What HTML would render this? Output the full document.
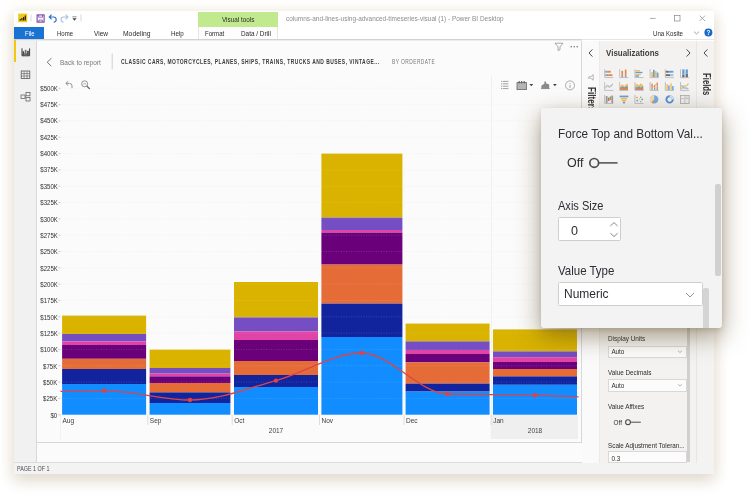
<!DOCTYPE html>
<html lang="en"><head><meta charset="utf-8"><title>Power BI Desktop</title><style>
html,body{margin:0;padding:0;}
body{width:750px;height:500px;position:relative;overflow:hidden;background:#ffffff;font-family:'Liberation Sans',sans-serif;}
div{position:absolute;}
.t{position:absolute;white-space:pre;line-height:1;}
.chart{position:absolute;left:0;top:0;}
#root{left:0;top:0;width:750px;height:500px;will-change:transform;}
</style></head>
<body>
<div id="root">
<div style="left:14px;top:11px;width:700px;height:463px;background:#ffffff;box-shadow:0 1px 14px 2px rgba(205,165,95,0.16), 0 7px 14px 0 rgba(110,100,80,0.20);"></div>
<div style="left:14px;top:27px;width:30.2px;height:12.3px;background:#1a73d2;"></div>
<div style="left:197.6px;top:12px;width:80.6px;height:15px;background:#c1ea8f;"></div>
<div style="left:197.6px;top:27px;width:80.6px;height:12.5px;background:#fdfdfd;border-left:1px solid #e6e6e6;border-right:1px solid #e6e6e6;box-sizing:border-box;"></div>
<div style="left:14px;top:39.2px;width:568px;height:1.2px;background:#d2d2d2;"></div>
<div style="left:14px;top:40.4px;width:568px;height:0.8px;background:#ececec;"></div>
<div style="left:582px;top:39.3px;width:132px;height:1.0px;background:#e6e6e6;"></div>
<div style="left:14px;top:40.5px;width:22.5px;height:423px;background:#f1f1f1;"></div>
<div style="left:14px;top:40px;width:1.5px;height:22.4px;background:#f2c811;"></div>
<div style="left:36.3px;top:40.5px;width:0.8px;height:421.5px;background:#d8d8d8;"></div>
<div style="left:37px;top:40.5px;width:544.5px;height:422.5px;background:#fbfbfb;"></div>
<div style="left:37px;top:441.5px;width:544.5px;height:0.9px;background:#d8d8d8;"></div>
<div style="left:581px;top:40.5px;width:0.9px;height:402px;background:#d8d8d8;"></div>
<div style="left:490.8px;top:75px;width:1px;height:340px;background:#f0f0f0;"></div>
<div style="left:491.3px;top:415px;width:87.2px;height:24px;background:#f0efef;"></div>
<div style="left:14px;top:461.8px;width:700px;height:12.2px;background:#f3f3f3;border-top:1px solid #dcdcdc;box-sizing:border-box;"></div>
<div style="left:582px;top:40.5px;width:17px;height:422.5px;background:#fafafa;"></div>
<div style="left:599px;top:40.5px;width:97.5px;height:422.5px;background:#f3f2f1;"></div>
<div style="left:598.6px;top:40.5px;width:0.8px;height:422.5px;background:#ebebeb;"></div>
<div style="left:696.3px;top:40.5px;width:0.8px;height:422.5px;background:#e6e6e6;"></div>
<div style="left:697px;top:40.5px;width:17px;height:422.5px;background:#f4f3f2;"></div>
<span class="t" style="left:286.00px;top:16.37px;font-size:6.3px;color:#8c8c8c;transform:scaleX(1.0260);transform-origin:left top;">columns-and-lines-using-advanced-timeseries-visual (1) - Power BI Desktop</span>
<span class="t" style="left:24.50px;top:30.91px;font-size:6.6px;color:#ffffff;transform:scaleX(0.9035);transform-origin:left top;">File</span>
<span class="t" style="left:57.00px;top:30.91px;font-size:6.6px;color:#2b2b2b;transform:scaleX(0.9094);transform-origin:left top;">Home</span>
<span class="t" style="left:93.50px;top:30.91px;font-size:6.6px;color:#2b2b2b;transform:scaleX(0.9868);transform-origin:left top;">View</span>
<span class="t" style="left:122.60px;top:30.91px;font-size:6.6px;color:#2b2b2b;transform:scaleX(1.0237);transform-origin:left top;">Modeling</span>
<span class="t" style="left:170.60px;top:30.91px;font-size:6.6px;color:#2b2b2b;transform:scaleX(0.9438);transform-origin:left top;">Help</span>
<span class="t" style="left:221.60px;top:16.91px;font-size:6.6px;color:#2b2b2b;transform:scaleX(0.9640);transform-origin:left top;">Visual tools</span>
<span class="t" style="left:205.40px;top:30.91px;font-size:6.6px;color:#2b2b2b;transform:scaleX(0.9191);transform-origin:left top;">Format</span>
<span class="t" style="left:240.60px;top:30.91px;font-size:6.6px;color:#2b2b2b;transform:scaleX(0.9681);transform-origin:left top;">Data / Drill</span>
<span class="t" style="left:653.00px;top:30.81px;font-size:6.6px;color:#2b2b2b;transform:scaleX(0.9298);transform-origin:left top;">Una Kosite</span>
<span class="t" style="left:60.00px;top:60.01px;font-size:6.6px;color:#7a7a7a;transform:scaleX(0.9940);transform-origin:left top;">Back to report</span>
<span class="t" style="left:121.00px;top:58.58px;font-size:6.4px;color:#3a3a3a;font-weight:700;letter-spacing:0.6px;transform:scaleX(0.7758);transform-origin:left top;">CLASSIC CARS, MOTORCYCLES, PLANES, SHIPS, TRAINS, TRUCKS AND BUSES, VINTAGE...</span>
<span class="t" style="left:392.00px;top:58.58px;font-size:6.4px;color:#777;letter-spacing:0.6px;transform:scaleX(0.7573);transform-origin:left top;">BY ORDERDATE</span>
<span class="t" style="left:50.17px;top:412.80px;font-size:6.5px;color:#2e2e2e;transform:scaleX(0.9300);transform-origin:right top;">$0</span>
<span class="t" style="left:42.21px;top:396.44px;font-size:6.5px;color:#2e2e2e;transform:scaleX(0.9300);transform-origin:right top;">$25K</span>
<span class="t" style="left:42.21px;top:380.09px;font-size:6.5px;color:#2e2e2e;transform:scaleX(0.9300);transform-origin:right top;">$50K</span>
<span class="t" style="left:42.21px;top:363.73px;font-size:6.5px;color:#2e2e2e;transform:scaleX(0.9300);transform-origin:right top;">$75K</span>
<span class="t" style="left:38.60px;top:347.38px;font-size:6.5px;color:#2e2e2e;transform:scaleX(0.9300);transform-origin:right top;">$100K</span>
<span class="t" style="left:38.60px;top:331.02px;font-size:6.5px;color:#2e2e2e;transform:scaleX(0.9300);transform-origin:right top;">$125K</span>
<span class="t" style="left:38.60px;top:314.67px;font-size:6.5px;color:#2e2e2e;transform:scaleX(0.9300);transform-origin:right top;">$150K</span>
<span class="t" style="left:38.60px;top:298.31px;font-size:6.5px;color:#2e2e2e;transform:scaleX(0.9300);transform-origin:right top;">$175K</span>
<span class="t" style="left:38.60px;top:281.96px;font-size:6.5px;color:#2e2e2e;transform:scaleX(0.9300);transform-origin:right top;">$200K</span>
<span class="t" style="left:38.60px;top:265.60px;font-size:6.5px;color:#2e2e2e;transform:scaleX(0.9300);transform-origin:right top;">$225K</span>
<span class="t" style="left:38.60px;top:249.25px;font-size:6.5px;color:#2e2e2e;transform:scaleX(0.9300);transform-origin:right top;">$250K</span>
<span class="t" style="left:38.60px;top:232.89px;font-size:6.5px;color:#2e2e2e;transform:scaleX(0.9300);transform-origin:right top;">$275K</span>
<span class="t" style="left:38.60px;top:216.54px;font-size:6.5px;color:#2e2e2e;transform:scaleX(0.9300);transform-origin:right top;">$300K</span>
<span class="t" style="left:38.60px;top:200.18px;font-size:6.5px;color:#2e2e2e;transform:scaleX(0.9300);transform-origin:right top;">$325K</span>
<span class="t" style="left:38.60px;top:183.83px;font-size:6.5px;color:#2e2e2e;transform:scaleX(0.9300);transform-origin:right top;">$350K</span>
<span class="t" style="left:38.60px;top:167.47px;font-size:6.5px;color:#2e2e2e;transform:scaleX(0.9300);transform-origin:right top;">$375K</span>
<span class="t" style="left:38.60px;top:151.12px;font-size:6.5px;color:#2e2e2e;transform:scaleX(0.9300);transform-origin:right top;">$400K</span>
<span class="t" style="left:38.60px;top:134.76px;font-size:6.5px;color:#2e2e2e;transform:scaleX(0.9300);transform-origin:right top;">$425K</span>
<span class="t" style="left:38.60px;top:118.41px;font-size:6.5px;color:#2e2e2e;transform:scaleX(0.9300);transform-origin:right top;">$450K</span>
<span class="t" style="left:38.60px;top:102.05px;font-size:6.5px;color:#2e2e2e;transform:scaleX(0.9300);transform-origin:right top;">$475K</span>
<span class="t" style="left:38.60px;top:85.70px;font-size:6.5px;color:#2e2e2e;transform:scaleX(0.9300);transform-origin:right top;">$500K</span>
<span class="t" style="left:62.50px;top:417.70px;font-size:6.5px;color:#3c3c3c;">Aug</span>
<span class="t" style="left:149.80px;top:417.70px;font-size:6.5px;color:#3c3c3c;">Sep</span>
<span class="t" style="left:234.20px;top:417.70px;font-size:6.5px;color:#3c3c3c;">Oct</span>
<span class="t" style="left:321.50px;top:417.70px;font-size:6.5px;color:#3c3c3c;">Nov</span>
<span class="t" style="left:406.00px;top:417.70px;font-size:6.5px;color:#3c3c3c;">Dec</span>
<span class="t" style="left:493.20px;top:417.70px;font-size:6.5px;color:#3c3c3c;">Jan</span>
<span class="t" style="left:268.77px;top:428.00px;font-size:6.5px;color:#444;">2017</span>
<span class="t" style="left:527.77px;top:428.00px;font-size:6.5px;color:#444;">2018</span>
<span class="t" style="left:17.20px;top:465.94px;font-size:6.8px;color:#4a4a4a;transform:scaleX(0.7893);transform-origin:left top;">PAGE 1 OF 1</span>
<span class="t" style="left:606.00px;top:48.27px;font-size:9.6px;color:#404040;font-weight:700;transform:scaleX(0.8306);transform-origin:left top;">Visualizations</span>
<span class="t" style="left:608.40px;top:336.30px;font-size:6.5px;color:#2c2c2c;transform:scaleX(0.9806);transform-origin:left top;">Display Units</span>
<span class="t" style="left:608.40px;top:370.30px;font-size:6.5px;color:#2c2c2c;transform:scaleX(0.9712);transform-origin:left top;">Value Decimals</span>
<span class="t" style="left:608.40px;top:403.70px;font-size:6.5px;color:#2c2c2c;transform:scaleX(0.9788);transform-origin:left top;">Value Affixes</span>
<span class="t" style="left:608.40px;top:443.10px;font-size:6.5px;color:#2c2c2c;transform:scaleX(0.9739);transform-origin:left top;">Scale Adjustment Toleran...</span>
<span class="t" style="left:710.87px;top:73.20px;font-size:10px;color:#333;font-weight:700;transform:rotate(90deg) scaleX(0.7749);transform-origin:left top;">Fields</span>
<span class="t" style="left:596.07px;top:87.20px;font-size:10px;color:#333;font-weight:700;transform:rotate(90deg) scaleX(0.8196);transform-origin:left top;">Filters</span>
<svg class="chart" width="750" height="500" viewBox="0 0 750 500"><line x1="61" x2="578" y1="414.70" y2="414.70" stroke="#f4ecf0" stroke-width="0.7" stroke-dasharray="1 1.5"/><line x1="58.4" x2="60.4" y1="414.70" y2="414.70" stroke="#b0b0b0" stroke-width="0.7"/><line x1="61" x2="578" y1="398.38" y2="398.38" stroke="#f4ecf0" stroke-width="0.7" stroke-dasharray="1 1.5"/><line x1="58.4" x2="60.4" y1="398.38" y2="398.38" stroke="#b0b0b0" stroke-width="0.7"/><line x1="61" x2="578" y1="382.06" y2="382.06" stroke="#f4ecf0" stroke-width="0.7" stroke-dasharray="1 1.5"/><line x1="58.4" x2="60.4" y1="382.06" y2="382.06" stroke="#b0b0b0" stroke-width="0.7"/><line x1="61" x2="578" y1="365.74" y2="365.74" stroke="#f4ecf0" stroke-width="0.7" stroke-dasharray="1 1.5"/><line x1="58.4" x2="60.4" y1="365.74" y2="365.74" stroke="#b0b0b0" stroke-width="0.7"/><line x1="61" x2="578" y1="349.42" y2="349.42" stroke="#f4ecf0" stroke-width="0.7" stroke-dasharray="1 1.5"/><line x1="58.4" x2="60.4" y1="349.42" y2="349.42" stroke="#b0b0b0" stroke-width="0.7"/><line x1="61" x2="578" y1="333.10" y2="333.10" stroke="#f4ecf0" stroke-width="0.7" stroke-dasharray="1 1.5"/><line x1="58.4" x2="60.4" y1="333.10" y2="333.10" stroke="#b0b0b0" stroke-width="0.7"/><line x1="61" x2="578" y1="316.78" y2="316.78" stroke="#f4ecf0" stroke-width="0.7" stroke-dasharray="1 1.5"/><line x1="58.4" x2="60.4" y1="316.78" y2="316.78" stroke="#b0b0b0" stroke-width="0.7"/><line x1="61" x2="578" y1="300.46" y2="300.46" stroke="#f4ecf0" stroke-width="0.7" stroke-dasharray="1 1.5"/><line x1="58.4" x2="60.4" y1="300.46" y2="300.46" stroke="#b0b0b0" stroke-width="0.7"/><line x1="61" x2="578" y1="284.14" y2="284.14" stroke="#f4ecf0" stroke-width="0.7" stroke-dasharray="1 1.5"/><line x1="58.4" x2="60.4" y1="284.14" y2="284.14" stroke="#b0b0b0" stroke-width="0.7"/><line x1="61" x2="578" y1="267.82" y2="267.82" stroke="#f4ecf0" stroke-width="0.7" stroke-dasharray="1 1.5"/><line x1="58.4" x2="60.4" y1="267.82" y2="267.82" stroke="#b0b0b0" stroke-width="0.7"/><line x1="61" x2="578" y1="251.50" y2="251.50" stroke="#f4ecf0" stroke-width="0.7" stroke-dasharray="1 1.5"/><line x1="58.4" x2="60.4" y1="251.50" y2="251.50" stroke="#b0b0b0" stroke-width="0.7"/><line x1="61" x2="578" y1="235.18" y2="235.18" stroke="#f4ecf0" stroke-width="0.7" stroke-dasharray="1 1.5"/><line x1="58.4" x2="60.4" y1="235.18" y2="235.18" stroke="#b0b0b0" stroke-width="0.7"/><line x1="61" x2="578" y1="218.86" y2="218.86" stroke="#f4ecf0" stroke-width="0.7" stroke-dasharray="1 1.5"/><line x1="58.4" x2="60.4" y1="218.86" y2="218.86" stroke="#b0b0b0" stroke-width="0.7"/><line x1="61" x2="578" y1="202.54" y2="202.54" stroke="#f4ecf0" stroke-width="0.7" stroke-dasharray="1 1.5"/><line x1="58.4" x2="60.4" y1="202.54" y2="202.54" stroke="#b0b0b0" stroke-width="0.7"/><line x1="61" x2="578" y1="186.22" y2="186.22" stroke="#f4ecf0" stroke-width="0.7" stroke-dasharray="1 1.5"/><line x1="58.4" x2="60.4" y1="186.22" y2="186.22" stroke="#b0b0b0" stroke-width="0.7"/><line x1="61" x2="578" y1="169.90" y2="169.90" stroke="#f4ecf0" stroke-width="0.7" stroke-dasharray="1 1.5"/><line x1="58.4" x2="60.4" y1="169.90" y2="169.90" stroke="#b0b0b0" stroke-width="0.7"/><line x1="61" x2="578" y1="153.58" y2="153.58" stroke="#f4ecf0" stroke-width="0.7" stroke-dasharray="1 1.5"/><line x1="58.4" x2="60.4" y1="153.58" y2="153.58" stroke="#b0b0b0" stroke-width="0.7"/><line x1="61" x2="578" y1="137.26" y2="137.26" stroke="#f4ecf0" stroke-width="0.7" stroke-dasharray="1 1.5"/><line x1="58.4" x2="60.4" y1="137.26" y2="137.26" stroke="#b0b0b0" stroke-width="0.7"/><line x1="61" x2="578" y1="120.94" y2="120.94" stroke="#f4ecf0" stroke-width="0.7" stroke-dasharray="1 1.5"/><line x1="58.4" x2="60.4" y1="120.94" y2="120.94" stroke="#b0b0b0" stroke-width="0.7"/><line x1="61" x2="578" y1="104.62" y2="104.62" stroke="#f4ecf0" stroke-width="0.7" stroke-dasharray="1 1.5"/><line x1="58.4" x2="60.4" y1="104.62" y2="104.62" stroke="#b0b0b0" stroke-width="0.7"/><line x1="61" x2="578" y1="88.30" y2="88.30" stroke="#f4ecf0" stroke-width="0.7" stroke-dasharray="1 1.5"/><line x1="58.4" x2="60.4" y1="88.30" y2="88.30" stroke="#b0b0b0" stroke-width="0.7"/><line x1="60.5" x2="60.5" y1="415" y2="439" stroke="#f0f0f0" stroke-width="0.8"/><line x1="147.8" x2="147.8" y1="415" y2="425" stroke="#d6d6d6" stroke-width="0.8"/><line x1="232.2" x2="232.2" y1="415" y2="425" stroke="#d6d6d6" stroke-width="0.8"/><line x1="319.5" x2="319.5" y1="415" y2="425" stroke="#d6d6d6" stroke-width="0.8"/><line x1="404.0" x2="404.0" y1="415" y2="425" stroke="#d6d6d6" stroke-width="0.8"/><line x1="491.2" x2="491.2" y1="415" y2="439" stroke="#f0f0f0" stroke-width="0.8"/><line x1="491.2" x2="491.2" y1="415" y2="425" stroke="#d6d6d6" stroke-width="0.8"/><rect x="62.1" y="315.60" width="84.00" height="18.40" fill="#d9b300"/><rect x="62.1" y="334.00" width="84.00" height="7.40" fill="#744ec2"/><rect x="62.1" y="341.40" width="84.00" height="3.60" fill="#e044a7"/><rect x="62.1" y="345.00" width="84.00" height="13.80" fill="#6b007b"/><rect x="62.1" y="358.80" width="84.00" height="10.20" fill="#e66c37"/><rect x="62.1" y="369.00" width="84.00" height="15.00" fill="#12239e"/><rect x="62.1" y="384.00" width="84.00" height="30.70" fill="#118dff"/><rect x="149.6" y="349.60" width="80.80" height="18.40" fill="#d9b300"/><rect x="149.6" y="368.00" width="80.80" height="5.60" fill="#744ec2"/><rect x="149.6" y="373.60" width="80.80" height="2.80" fill="#e044a7"/><rect x="149.6" y="376.40" width="80.80" height="6.60" fill="#6b007b"/><rect x="149.6" y="383.00" width="80.80" height="9.40" fill="#e66c37"/><rect x="149.6" y="392.40" width="80.80" height="10.60" fill="#12239e"/><rect x="149.6" y="403.00" width="80.80" height="11.70" fill="#118dff"/><rect x="234.0" y="282.00" width="84.00" height="35.40" fill="#d9b300"/><rect x="234.0" y="317.40" width="84.00" height="14.00" fill="#744ec2"/><rect x="234.0" y="331.40" width="84.00" height="8.60" fill="#e044a7"/><rect x="234.0" y="340.00" width="84.00" height="21.00" fill="#6b007b"/><rect x="234.0" y="361.00" width="84.00" height="14.00" fill="#e66c37"/><rect x="234.0" y="375.00" width="84.00" height="12.00" fill="#12239e"/><rect x="234.0" y="387.00" width="84.00" height="27.70" fill="#118dff"/><rect x="321.4" y="153.60" width="81.00" height="64.00" fill="#d9b300"/><rect x="321.4" y="217.60" width="81.00" height="12.40" fill="#744ec2"/><rect x="321.4" y="230.00" width="81.00" height="2.60" fill="#e044a7"/><rect x="321.4" y="232.60" width="81.00" height="32.00" fill="#6b007b"/><rect x="321.4" y="264.60" width="81.00" height="39.00" fill="#e66c37"/><rect x="321.4" y="303.60" width="81.00" height="33.40" fill="#12239e"/><rect x="321.4" y="337.00" width="81.00" height="77.70" fill="#118dff"/><rect x="405.6" y="323.60" width="84.00" height="17.80" fill="#d9b300"/><rect x="405.6" y="341.40" width="84.00" height="8.60" fill="#744ec2"/><rect x="405.6" y="350.00" width="84.00" height="4.00" fill="#e044a7"/><rect x="405.6" y="354.00" width="84.00" height="8.40" fill="#6b007b"/><rect x="405.6" y="362.40" width="84.00" height="21.20" fill="#e66c37"/><rect x="405.6" y="383.60" width="84.00" height="8.00" fill="#12239e"/><rect x="405.6" y="391.60" width="84.00" height="23.10" fill="#118dff"/><rect x="493.0" y="329.40" width="84.00" height="22.00" fill="#d9b300"/><rect x="493.0" y="351.40" width="84.00" height="5.80" fill="#744ec2"/><rect x="493.0" y="357.20" width="84.00" height="4.80" fill="#e044a7"/><rect x="493.0" y="362.00" width="84.00" height="7.00" fill="#6b007b"/><rect x="493.0" y="369.00" width="84.00" height="7.40" fill="#e66c37"/><rect x="493.0" y="376.40" width="84.00" height="8.40" fill="#12239e"/><rect x="493.0" y="384.80" width="84.00" height="29.90" fill="#118dff"/><line x1="61" x2="578" y1="398.38" y2="398.38" stroke="rgba(255,255,255,0.22)" stroke-width="0.7" stroke-dasharray="1 1.5"/><line x1="61" x2="578" y1="382.06" y2="382.06" stroke="rgba(255,255,255,0.22)" stroke-width="0.7" stroke-dasharray="1 1.5"/><line x1="61" x2="578" y1="365.74" y2="365.74" stroke="rgba(255,255,255,0.22)" stroke-width="0.7" stroke-dasharray="1 1.5"/><line x1="61" x2="578" y1="349.42" y2="349.42" stroke="rgba(255,255,255,0.22)" stroke-width="0.7" stroke-dasharray="1 1.5"/><line x1="61" x2="578" y1="333.10" y2="333.10" stroke="rgba(255,255,255,0.22)" stroke-width="0.7" stroke-dasharray="1 1.5"/><line x1="61" x2="578" y1="316.78" y2="316.78" stroke="rgba(255,255,255,0.22)" stroke-width="0.7" stroke-dasharray="1 1.5"/><line x1="61" x2="578" y1="300.46" y2="300.46" stroke="rgba(255,255,255,0.22)" stroke-width="0.7" stroke-dasharray="1 1.5"/><line x1="61" x2="578" y1="284.14" y2="284.14" stroke="rgba(255,255,255,0.22)" stroke-width="0.7" stroke-dasharray="1 1.5"/><line x1="61" x2="578" y1="267.82" y2="267.82" stroke="rgba(255,255,255,0.22)" stroke-width="0.7" stroke-dasharray="1 1.5"/><line x1="61" x2="578" y1="251.50" y2="251.50" stroke="rgba(255,255,255,0.22)" stroke-width="0.7" stroke-dasharray="1 1.5"/><line x1="61" x2="578" y1="235.18" y2="235.18" stroke="rgba(255,255,255,0.22)" stroke-width="0.7" stroke-dasharray="1 1.5"/><line x1="61" x2="578" y1="218.86" y2="218.86" stroke="rgba(255,255,255,0.22)" stroke-width="0.7" stroke-dasharray="1 1.5"/><line x1="61" x2="578" y1="202.54" y2="202.54" stroke="rgba(255,255,255,0.22)" stroke-width="0.7" stroke-dasharray="1 1.5"/><line x1="61" x2="578" y1="186.22" y2="186.22" stroke="rgba(255,255,255,0.22)" stroke-width="0.7" stroke-dasharray="1 1.5"/><line x1="61" x2="578" y1="169.90" y2="169.90" stroke="rgba(255,255,255,0.22)" stroke-width="0.7" stroke-dasharray="1 1.5"/><line x1="61" x2="578" y1="153.58" y2="153.58" stroke="rgba(255,255,255,0.22)" stroke-width="0.7" stroke-dasharray="1 1.5"/><line x1="61" x2="578" y1="137.26" y2="137.26" stroke="rgba(255,255,255,0.22)" stroke-width="0.7" stroke-dasharray="1 1.5"/><line x1="61" x2="578" y1="120.94" y2="120.94" stroke="rgba(255,255,255,0.22)" stroke-width="0.7" stroke-dasharray="1 1.5"/><line x1="61" x2="578" y1="104.62" y2="104.62" stroke="rgba(255,255,255,0.22)" stroke-width="0.7" stroke-dasharray="1 1.5"/><line x1="61" x2="578" y1="88.30" y2="88.30" stroke="rgba(255,255,255,0.22)" stroke-width="0.7" stroke-dasharray="1 1.5"/><clipPath id="plotclip"><rect x="60.5" y="80" width="518" height="340"/></clipPath><path d="M17.0,392.6 C46.13,391.93 75.27,390.60 104.4,390.6 C132.93,390.60 161.47,400.00 190,400 C218.67,400.00 247.33,388.46 276,380.6 C304.53,372.78 333.07,353.00 361.6,353 C390.27,353.00 418.93,393.21 447.6,394 C476.73,394.80 505.87,394.40 535,395.2 C563.83,395.99 592.67,397.73 621.5,399.0 " fill="none" stroke="#dc4449" stroke-width="1.3" clip-path="url(#plotclip)"/><circle cx="104.4" cy="390.6" r="2.2" fill="#e2413f"/><circle cx="190" cy="400" r="2.2" fill="#e2413f"/><circle cx="276" cy="380.6" r="2.2" fill="#e2413f"/><circle cx="361.6" cy="353" r="2.2" fill="#e2413f"/><circle cx="447.6" cy="394" r="2.2" fill="#e2413f"/><circle cx="535" cy="395.2" r="2.2" fill="#e2413f"/></svg>
<div style="left:608.4px;top:345.6px;width:78.4px;height:12.2px;background:#fcfcfc;border:1px solid #d9d8d6;box-sizing:border-box;"></div>
<div style="left:608.4px;top:379.2px;width:78.4px;height:12.4px;background:#fcfcfc;border:1px solid #d9d8d6;box-sizing:border-box;"></div>
<div style="left:608.4px;top:451.4px;width:78.4px;height:12px;background:#fcfcfc;border:1px solid #d9d8d6;box-sizing:border-box;"></div>
<div style="left:686.8px;top:328px;width:3.4px;height:134px;background:#d0d0d0;"></div>
<span class="t" style="left:611.40px;top:349.27px;font-size:6.3px;color:#2c2c2c;">Auto</span>
<span class="t" style="left:611.40px;top:383.07px;font-size:6.3px;color:#2c2c2c;">Auto</span>
<span class="t" style="left:613.60px;top:419.67px;font-size:6.3px;color:#2c2c2c;">Off</span>
<span class="t" style="left:611.40px;top:455.67px;font-size:6.3px;color:#2c2c2c;">0.3</span>
<svg class="chart" width="750" height="500" viewBox="0 0 750 500" fill="none"><rect x="18.2" y="13.6" width="9" height="8.6" fill="#f2c811"/><path d="M20.2 20.6v-1.6M21.9 20.6v-2.6M23.6 20.6v-3.6M25.3 20.6v-5" stroke="#222" stroke-width="1.2"/><line x1="31" x2="31" y1="14.5" y2="21.5" stroke="#cfcfcf" stroke-width="0.8"/><rect x="37.1" y="14.9" width="7" height="7.2" stroke="#6f2a9e" stroke-width="1"/><path d="M38.7 15v2.2h3.8V15M38.9 22v-2h3.4V22" stroke="#6f2a9e" stroke-width="0.7"/><path d="M51.6 14.6l-2.4 2.4 2.4 2.4M49.4 17h4.2a2.6 2.6 0 0 1 0 5.2" stroke="#2b6fc2" stroke-width="1.1"/><path d="M65.6 14.6l2.4 2.4-2.4 2.4M67.8 17h-4.2a2.6 2.6 0 0 0 0 5.2" stroke="#a9c3e0" stroke-width="1.1"/><path d="M72.4 18.2h4.2l-2.1 2.6z" fill="#444"/><line x1="72.4" x2="76.6" y1="16.8" y2="16.8" stroke="#444" stroke-width="0.6"/><line x1="81" x2="81" y1="14.5" y2="21.5" stroke="#cfcfcf" stroke-width="0.8"/><line x1="650" x2="655.6" y1="18.4" y2="18.4" stroke="#888" stroke-width="0.7"/><rect x="674.6" y="15.6" width="5.4" height="5.4" stroke="#888" stroke-width="0.7"/><path d="M699.6 15.6l5.4 5.4M705 15.6l-5.4 5.4" stroke="#888" stroke-width="0.7"/><path d="M694 31.6l2.5 2.4 2.5-2.4" stroke="#777" stroke-width="0.7"/><circle cx="708.4" cy="32.6" r="4" fill="#1668c9"/><path d="M22 48.4v7.4h7.6v-7.4" stroke="#3a3a3a" stroke-width="1"/><rect x="22.5" y="51.2" width="1.7" height="4.4" fill="#4a4a4a"/><rect x="24.8" y="49.8" width="1.7" height="5.8" fill="#777"/><rect x="27.1" y="50.8" width="1.7" height="4.8" fill="#4a4a4a"/><rect x="22" y="53.4" width="7.6" height="2.4" fill="#555" opacity="0.7"/><rect x="21.2" y="71" width="8.6" height="7.4" stroke="#555" stroke-width="0.8"/><path d="M21.2 73.6h8.6M21.2 76h8.6M24.1 71v7.4M27 71v7.4" stroke="#555" stroke-width="0.6"/><rect x="21" y="95" width="4" height="3.4" stroke="#555" stroke-width="0.7"/><rect x="26" y="92.4" width="4" height="3.4" stroke="#555" stroke-width="0.7"/><rect x="26" y="97.6" width="4" height="3.4" stroke="#555" stroke-width="0.7"/><path d="M25 96.7h1" stroke="#555" stroke-width="0.6"/><path d="M51.4 58.2l-4.2 4 4.2 4" stroke="#555" stroke-width="0.8"/><line x1="112.2" x2="112.2" y1="53.4" y2="69.4" stroke="#c8c8c8" stroke-width="0.8"/><path d="M68.2 81.2l-2.4 2.2 2.4 2.2M66 83.4h3.6a2.4 2.4 0 0 1 2.4 2.4v2.4" stroke="#888" stroke-width="0.9"/><circle cx="84.6" cy="83.8" r="3" stroke="#777" stroke-width="0.8"/><path d="M86.8 86l3 3" stroke="#666" stroke-width="1.1"/><path d="M83.2 83.8h2.8" stroke="#777" stroke-width="0.6"/><path d="M555 43.2h8l-3 3.6v3l-2 0.6v-3.6z" stroke="#888" stroke-width="0.7"/><circle cx="571.2" cy="46.8" r="0.7" fill="#666"/><circle cx="574.2" cy="46.8" r="0.7" fill="#666"/><circle cx="577.2" cy="46.8" r="0.7" fill="#666"/><path d="M501 81.4h7.4M501 83.8h7.4M501 86.2h7.4M501 88.6h7.4" stroke="#8a8a8a" stroke-width="0.8" stroke-dasharray="1 0.6 6 0"/><rect x="517" y="82.6" width="9.4" height="7" fill="#b5b5b5" stroke="#666" stroke-width="0.8"/><path d="M519.2 81v2.4M521.7 81v2.4M524.2 81v2.4" stroke="#555" stroke-width="1"/><path d="M529.4 84h3.8l-1.9 2.2z" fill="#444"/><path d="M541.4 88.4v-3l3-1.6v-2.4l1.6 0v1.8l3.2 1.2v4z" fill="#8a8a8a"/><line x1="541" x2="549.8" y1="88.6" y2="88.6" stroke="#666" stroke-width="0.6"/><path d="M553 84h3.8l-1.9 2.2z" fill="#444"/><circle cx="570" cy="85.4" r="4.5" stroke="#888" stroke-width="0.7"/><path d="M570 83v0.8M570 84.8v3" stroke="#888" stroke-width="0.8"/><path d="M592.4 49.4l-3.4 3.6 3.4 3.6" stroke="#4a4a4a" stroke-width="1"/><path d="M686.6 49.4l3.4 3.6-3.4 3.6" stroke="#4a4a4a" stroke-width="1"/><path d="M707.4 49.4l-3.4 3.6 3.4 3.6" stroke="#4a4a4a" stroke-width="1"/><path d="M588 75h5.6l-2 2.4v2.4l-1.6-0.8v-1.6z" stroke="#888" stroke-width="0.6" transform="rotate(90 590.8 77.4)"/><g opacity="0.85"><rect x="604.8000000000001" y="69.2" width="8.6" height="8.2" fill="#f4f4f4"/><path d="M604.7 69.2v8.4h8.7" stroke="#b0b0b0" stroke-width="0.9"/><rect x="605.2" y="70.8" width="2" height="1.9" fill="#8c8c8c"/><rect x="607.2" y="70.8" width="3.6" height="1.9" fill="#e8742c"/><rect x="605.2" y="74.2" width="1.6" height="1.9" fill="#8c8c8c"/><rect x="606.8" y="74.2" width="2" height="1.9" fill="#4c8fd6"/><rect x="608.8" y="74.2" width="3.6" height="1.9" fill="#e8742c"/><rect x="619.8000000000001" y="69.2" width="8.6" height="8.2" fill="#f4f4f4"/><path d="M619.7 69.2v8.4h8.7" stroke="#b0b0b0" stroke-width="0.9"/><rect x="621.4000000000001" y="74.8" width="1.7" height="2.4" fill="#8c8c8c"/><rect x="621.4000000000001" y="70.8" width="1.7" height="4" fill="#e8742c"/><rect x="624.8000000000001" y="74.2" width="1.7" height="3" fill="#8c8c8c"/><rect x="624.8000000000001" y="69.6" width="1.7" height="4.6" fill="#e8742c"/><rect x="635.0" y="69.2" width="8.6" height="8.2" fill="#f4f4f4"/><path d="M634.9 69.2v8.4h8.7" stroke="#b0b0b0" stroke-width="0.9"/><rect x="635.4" y="70.0" width="4.6" height="1.4" fill="#f0b64a"/><rect x="635.4" y="71.8" width="7" height="1.4" fill="#4c8fd6"/><rect x="635.4" y="73.8" width="5.4" height="1.4" fill="#f0b64a"/><rect x="635.4" y="75.4" width="3.6" height="1.4" fill="#4c8fd6"/><rect x="650.2" y="69.2" width="8.6" height="8.2" fill="#f4f4f4"/><path d="M650.1 69.2v8.4h8.7" stroke="#b0b0b0" stroke-width="0.9"/><rect x="651.2" y="72.2" width="1.7" height="5" fill="#f0b64a"/><rect x="653.0" y="69.8" width="1.7" height="7.4" fill="#4c8fd6"/><rect x="655.0" y="71.2" width="1.7" height="6" fill="#f0b64a"/><rect x="656.8000000000001" y="72.6" width="1.7" height="4.6" fill="#4c8fd6"/><rect x="665.4" y="69.2" width="8.6" height="8.2" fill="#f4f4f4"/><path d="M665.3 69.2v8.4h8.7" stroke="#b0b0b0" stroke-width="0.9"/><rect x="665.8" y="70.8" width="3" height="1.9" fill="#555"/><rect x="668.8" y="70.8" width="4.6" height="1.9" fill="#4c8fd6"/><rect x="665.8" y="74.2" width="4.6" height="1.9" fill="#555"/><rect x="670.4" y="74.2" width="3" height="1.9" fill="#8db7e2"/><rect x="680.6" y="69.2" width="8.6" height="8.2" fill="#f4f4f4"/><path d="M680.5 69.2v8.4h8.7" stroke="#b0b0b0" stroke-width="0.9"/><rect x="682.2" y="74.6" width="2.3" height="2.6" fill="#555"/><rect x="682.2" y="69.4" width="2.3" height="5.2" fill="#4c8fd6"/><rect x="685.6" y="73.6" width="2.3" height="3.6" fill="#555"/><rect x="685.6" y="69.4" width="2.3" height="4.2" fill="#4c8fd6"/><rect x="604.8000000000001" y="82.0" width="8.6" height="8.2" fill="#f4f4f4"/><path d="M604.7 82.0v8.4h8.7" stroke="#b0b0b0" stroke-width="0.9"/><path d="M605.2 87.4l2.2-2.2 2.2 1.6 3.4-3" stroke="#4c8fd6" stroke-width="0.8"/><path d="M605.2 88.4l2.2-1.6 2.2 0.6 3.4-2" stroke="#e8742c" stroke-width="0.5" opacity="0.7"/><rect x="619.8000000000001" y="82.0" width="8.6" height="8.2" fill="#f4f4f4"/><path d="M619.7 82.0v8.4h8.7" stroke="#b0b0b0" stroke-width="0.9"/><path d="M620.2 90.0v-4.2l2.2-1.6 2 1.8 2.6-2.6 1 0.8v5.8z" fill="#f0b64a"/><path d="M620.2 90.0v-2.6l2.2-1 2 1 2.6-1.2 1 0.6v3.2z" fill="#4c8fd6"/><path d="M620.2 90.0v-1.8l2.2-0.4 2 0.6 3.6-0.6v2.2z" fill="#e8742c"/><rect x="635.0" y="82.0" width="8.6" height="8.2" fill="#f4f4f4"/><path d="M634.9 82.0v8.4h8.7" stroke="#b0b0b0" stroke-width="0.9"/><path d="M635.4 90.0v-5l1.6-1.4 1.8 1.6 2-2 2.4 2v4.8z" fill="#f0b64a"/><path d="M635.4 90.0v-3.4l1.6 1.2 1.8-1.6 2 1.6 2.4-1.8v4z" fill="#4c8fd6"/><path d="M635.4 90.0v-1.2l7.8-0.2v1.4z" fill="#e8742c"/><rect x="650.2" y="82.0" width="8.6" height="8.2" fill="#f4f4f4"/><path d="M650.1 82.0v8.4h8.7" stroke="#b0b0b0" stroke-width="0.9"/><rect x="651.4" y="87.0" width="1.3" height="3" fill="#8c8c8c"/><rect x="651.4" y="83.6" width="1.3" height="3.4" fill="#e8742c"/><rect x="654.0" y="87.6" width="1.3" height="2.4" fill="#8c8c8c"/><rect x="654.0" y="85.0" width="1.3" height="2.6" fill="#e8742c"/><rect x="656.6" y="86.6" width="1.3" height="3.4" fill="#8c8c8c"/><rect x="656.6" y="82.6" width="1.3" height="4" fill="#e8742c"/><path d="M650.6 85.0l3 2 2.6-3.4 2 1" stroke="#e8742c" stroke-width="0.5"/><rect x="665.4" y="82.0" width="8.6" height="8.2" fill="#f4f4f4"/><path d="M665.3 82.0v8.4h8.7" stroke="#b0b0b0" stroke-width="0.9"/><rect x="666.4" y="84.0" width="1.4" height="6" fill="#f0b64a"/><rect x="668.1999999999999" y="85.4" width="1.4" height="4.6" fill="#4c8fd6"/><rect x="670.4" y="83.2" width="1.4" height="6.8" fill="#f0b64a"/><rect x="672.1999999999999" y="86.0" width="1.4" height="4" fill="#4c8fd6"/><rect x="680.6" y="82.0" width="8.6" height="8.2" fill="#f4f4f4"/><path d="M680.5 82.0v8.4h8.7" stroke="#b0b0b0" stroke-width="0.9"/><path d="M681.4 89.0c2-3 2-3 3.6-3s2 0 3.4-2.4" stroke="#f0b64a" stroke-width="1.6"/><path d="M681.4 85.0c2 3 2 3 3.6 3s2 0 3.4 1" stroke="#8db7e2" stroke-width="1.4"/><rect x="604.8000000000001" y="95.0" width="8.6" height="8.2" fill="#f4f4f4"/><path d="M604.7 95.0v8.4h8.7" stroke="#b0b0b0" stroke-width="0.9"/><rect x="605.8000000000001" y="96.0" width="1.7" height="7" fill="#8c8c8c"/><rect x="607.8000000000001" y="101.0" width="1.7" height="2" fill="none"/><rect x="607.8000000000001" y="97.6" width="1.7" height="3.4" fill="#d9534f"/><rect x="609.6" y="100.0" width="1.7" height="3" fill="none"/><rect x="609.6" y="96.4" width="1.7" height="3.6" fill="#6aa84f"/><rect x="611.4000000000001" y="95.6" width="1.7" height="7.4" fill="#8c8c8c"/><rect x="619.6" y="95.6" width="8.8" height="1.7" fill="#4c8fd6"/><rect x="620.8000000000001" y="97.7" width="6.4" height="1.7" fill="#f0b64a"/><rect x="622.0" y="99.8" width="4" height="1.7" fill="#f0b64a"/><rect x="623.0" y="101.9" width="2" height="1.5" fill="#4c8fd6"/><rect x="635.0" y="95.0" width="8.6" height="8.2" fill="#f4f4f4"/><path d="M634.9 95.0v8.4h8.7" stroke="#b0b0b0" stroke-width="0.9"/><circle cx="637.0" cy="97.6" r="0.8" fill="#e8742c"/><circle cx="640.8" cy="97.2" r="0.8" fill="#6aa84f"/><circle cx="642.1999999999999" cy="99.4" r="0.9" fill="#4c8fd6"/><circle cx="637.1999999999999" cy="100.6" r="0.9" fill="#4c8fd6"/><circle cx="639.6" cy="99.2" r="0.7" fill="#f0b64a"/><circle cx="640.6" cy="101.6" r="0.7" fill="#6aa84f"/><circle cx="654.2" cy="99.4" r="4.2" fill="#4c8fd6" opacity="0.85"/><path d="M654.2 99.4v-4.2a4.2 4.2 0 0 0 -2.6 7.5z" fill="#f3d9a8"/><path d="M654.2 99.4l-2.6 3.3a4.2 4.2 0 0 0 2 0.9z" fill="#e8742c" opacity="0.7"/><circle cx="669.5999999999999" cy="99.4" r="3.2" stroke="#2f7fd1" stroke-width="1.9"/><path d="M669.5999999999999 96.2a3.2 3.2 0 0 1 3.2 3.2" stroke="#cfe0f2" stroke-width="1.9"/><rect x="680.5" y="95.4" width="8.6" height="8" fill="#ededed" stroke="#9a9a9a" stroke-width="0.8"/><path d="M680.5 98.6h8.6M684.8 95.4v8M686.8 95.4v3.2" stroke="#b0b0b0" stroke-width="0.7"/></g><path d="M678 350.70000000000005l2 1.8 2-1.8" stroke="#888" stroke-width="0.6"/><path d="M678 384.3l2 1.8 2-1.8" stroke="#888" stroke-width="0.6"/><circle cx="628" cy="422.2" r="2.4" stroke="#4a4a4a" stroke-width="1.1" fill="#f3f2f1"/><line x1="630.8" x2="640.8" y1="422.2" y2="422.2" stroke="#4a4a4a" stroke-width="1.0"/></svg>
<span class="t" style="left:706.45px;top:29.58px;font-size:6.4px;color:#ffffff;font-weight:700;">?</span>
<div style="left:541px;top:108px;width:181.2px;height:219.8px;background:#f4f3f3;border-radius:1.5px 1.5px 3px 3px;box-shadow:0 8px 25px 0 rgba(85,65,25,0.50), 0 2px 5px rgba(70,55,20,0.14);"></div>
<div style="left:558.2px;top:217.2px;width:62.8px;height:23.6px;background:#fff;border:1px solid #d0cecc;border-radius:1.5px;box-sizing:border-box;"></div>
<div style="left:558.2px;top:282.2px;width:144.8px;height:23.6px;background:#fff;border:1px solid #d0cecc;border-radius:1.5px;box-sizing:border-box;"></div>
<div style="left:715.2px;top:184px;width:5.6px;height:92px;background:#d0d0d0;border-radius:2px;"></div>
<div style="left:703.4px;top:288px;width:5.6px;height:39.8px;background:#d4d4d4;border-radius:2px 2px 0 0;"></div>
<span class="t" style="left:558.20px;top:128.36px;font-size:12.8px;color:#2c2c34;transform:scaleX(0.9197);transform-origin:left top;">Force Top and Bottom Val...</span>
<span class="t" style="left:567.20px;top:156.76px;font-size:12.8px;color:#2c2c34;transform:scaleX(0.9737);transform-origin:left top;">Off</span>
<span class="t" style="left:558.20px;top:199.83px;font-size:12.6px;color:#2c2c34;transform:scaleX(0.8765);transform-origin:left top;">Axis Size</span>
<span class="t" style="left:570.90px;top:224.56px;font-size:12.8px;color:#2c2c34;transform:scaleX(0.9825);transform-origin:left top;">0</span>
<span class="t" style="left:558.40px;top:264.56px;font-size:12.8px;color:#2c2c34;transform:scaleX(0.8972);transform-origin:left top;">Value Type</span>
<span class="t" style="left:563.60px;top:287.56px;font-size:12.8px;color:#2c2c34;transform:scaleX(0.9362);transform-origin:left top;">Numeric</span>
<svg class="chart" width="750" height="500" viewBox="0 0 750 500" fill="none"><circle cx="594.2" cy="162.9" r="4.4" stroke="#4c4c4c" stroke-width="1.7" fill="#f4f3f3"/><line x1="599" x2="617.6" y1="162.9" y2="162.9" stroke="#4c4c4c" stroke-width="1.5"/><path d="M610.4 226l3.6-3.4 3.6 3.4M610.4 233.2l3.6 3.4 3.6-3.4" stroke="#6e646e" stroke-width="0.8"/><path d="M686 293l4 4 4-4" stroke="#777" stroke-width="0.8"/></svg>
</div>
</body></html>
